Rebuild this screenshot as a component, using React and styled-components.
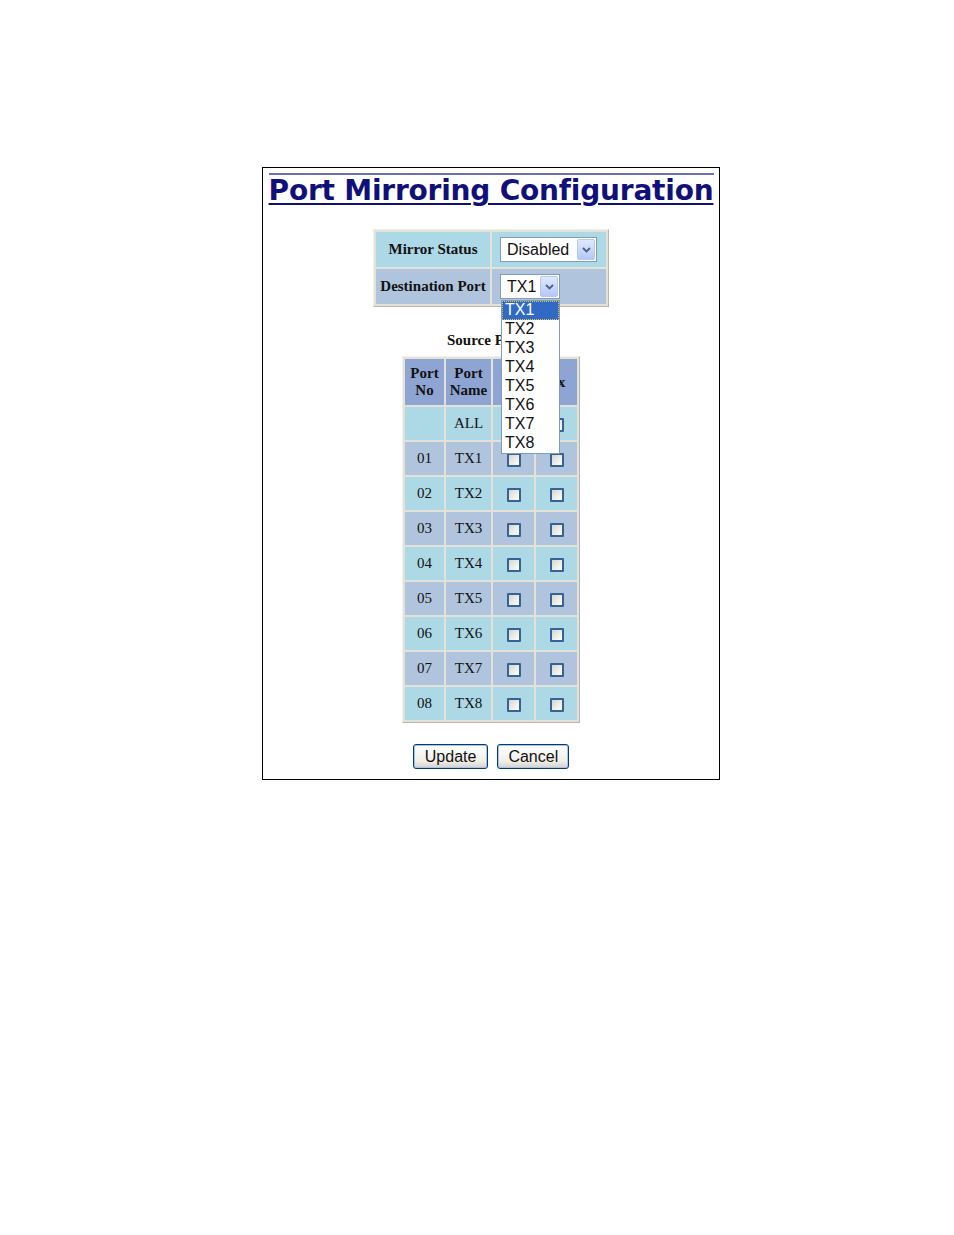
import React from "react";
import styled, { createGlobalStyle } from "styled-components";

const Global = createGlobalStyle`
  body {
    margin: 0;
    background: #fff;
    font-family: "Liberation Serif", "Times New Roman", serif;
  }
`;

const Page = styled.div`
  padding: 167px 0 0 262px;
  height: 1068px;
`;

const Frame = styled.div`
  width: 456px;
  border: 1px solid #000;
  padding: 5px 0 10px 0;
  display: flex;
  flex-direction: column;
  align-items: center;
`;

const Title = styled.h1`
  margin: 0;
  width: 445px;
  border-top: 2px solid #6f6fb4;
  font-family: "DejaVu Sans", Verdana, sans-serif;
  font-weight: bold;
  font-size: 28px;
  line-height: 32px;
  color: #10107a;
  text-align: center;
  text-decoration: underline;
  text-decoration-thickness: 2px;
  text-underline-offset: 3px;
  letter-spacing: -0.2px;
  white-space: nowrap;
`;

const StatusTable = styled.table`
  margin-top: 22px;
  border-collapse: separate;
  border-spacing: 2px;
  background: #e4e2d8;
  border: 1px solid;
  border-color: #f2f1ea #b9b6a8 #b9b6a8 #f2f1ea;
`;

const Row = styled.tr`
  background: ${(p) => (p.$alt ? "#b0c4de" : "#add8e6")};
`;

const LabelCell = styled.td`
  width: 114px;
  height: 35px;
  padding: 0;
  text-align: center;
  font-weight: bold;
  font-size: 15px;
  color: #111;
`;

const FieldCell = styled.td`
  width: 114px;
  height: 35px;
  padding: 0 0 0 8px;
  vertical-align: middle;
  box-sizing: border-box;
`;

const SelectBox = styled.div`
  position: relative;
  display: flex;
  align-items: center;
  width: ${(p) => p.$w}px;
  height: 23px;
  background: #fff;
  border: 1px solid #7f9db9;
  font-family: "Liberation Sans", Arial, sans-serif;
  font-size: 16px;
  color: #111;
`;

const SelectText = styled.span`
  flex: 1;
  padding-left: 6px;
  line-height: 23px;
`;

const ArrowBtn = styled.span`
  width: 18px;
  height: 21px;
  margin-right: 1px;
  border-radius: 2px;
  background: linear-gradient(#dfe8fd, #b5c8f7);
  border: 1px solid #b7c7ef;
  box-sizing: border-box;
  display: flex;
  align-items: center;
  justify-content: center;
`;

const List = styled.div`
  position: absolute;
  left: 0;
  top: 25px;
  width: 57px;
  border: 1px solid #7f9db9;
  background: #fff;
  z-index: 5;
`;

const Option = styled.div`
  height: 19px;
  line-height: 18px;
  padding-left: 3px;
  font-size: 16px;
  color: ${(p) => (p.$sel ? "#fff" : "#111")};
  background: ${(p) => (p.$sel ? "#316ac5" : "transparent")};
  outline: ${(p) => (p.$sel ? "1px dotted #e8c050" : "none")};
  outline-offset: -1px;
`;

const Caption = styled.div`
  margin-top: 25px;
  margin-right: 12px;
  font-weight: bold;
  font-size: 15px;
  color: #111;
  line-height: 17px;
`;

const PortTable = styled.table`
  margin-top: 7px;
  border-collapse: separate;
  border-spacing: 2px;
  background: #e4e2d8;
  border: 1px solid;
  border-color: #f2f1ea #b9b6a8 #b9b6a8 #f2f1ea;
`;

const Head = styled.th`
  background: #8ea5d3;
  height: 46px;
  width: ${(p) => p.$w}px;
  padding: 0;
  font-size: 15px;
  line-height: 17px;
  font-weight: bold;
  color: #111;
`;

const Cell = styled.td`
  height: 33px;
  padding: 0;
  text-align: center;
  vertical-align: middle;
  font-size: 15px;
  color: #111;
`;

const Check = styled.span`
  display: inline-block;
  width: 14px;
  height: 14px;
  margin-top: 1px;
  border: 2px solid #356396;
  border-radius: 1px;
  background: linear-gradient(135deg, #d6d6d0, #ffffff);
  box-sizing: border-box;
  vertical-align: middle;
`;

const Buttons = styled.div`
  margin-top: 21px;
  display: flex;
  gap: 9px;
`;

const Button = styled.button`
  height: 25px;
  padding: 0 ${(p) => p.$pad || 10}px;
  border: 1px solid #003c74;
  border-radius: 3px;
  background: linear-gradient(#ffffff, #f0efe8 70%, #d6d0c5);
  font-family: "Liberation Sans", Arial, sans-serif;
  font-size: 16px;
  color: #111;
  box-shadow: inset 0 0 0 1px #aac3ee;
`;

const Chevron = () => (
  <svg width="9" height="6" viewBox="0 0 9 6">
    <path d="M1 1 L4.5 4.5 L8 1" fill="none" stroke="#4d6185" strokeWidth="1.8" />
  </svg>
);

const ports = ["01", "02", "03", "04", "05", "06", "07", "08"];

export default function App() {
  return (
    <Page>
      <Global />
      <Frame>
        <Title>Port Mirroring Configuration</Title>
        <StatusTable>
          <tbody>
            <Row>
              <LabelCell>Mirror Status</LabelCell>
              <FieldCell>
                <SelectBox $w={95}>
                  <SelectText>Disabled</SelectText>
                  <ArrowBtn>
                    <Chevron />
                  </ArrowBtn>
                </SelectBox>
              </FieldCell>
            </Row>
            <Row $alt>
              <LabelCell>Destination Port</LabelCell>
              <FieldCell>
                <SelectBox $w={58}>
                  <SelectText>TX1</SelectText>
                  <ArrowBtn>
                    <Chevron />
                  </ArrowBtn>
                  <List>
                    {ports.map((p, i) => (
                      <Option key={p} $sel={i === 0}>
                        TX{i + 1}
                      </Option>
                    ))}
                  </List>
                </SelectBox>
              </FieldCell>
            </Row>
          </tbody>
        </StatusTable>
        <Caption>Source Port</Caption>
        <PortTable>
          <tbody>
            <tr>
              <Head $w={39}>Port<br />No</Head>
              <Head $w={45}>Port<br />Name</Head>
              <Head $w={41}>Rx</Head>
              <Head $w={41}>Tx</Head>
            </tr>
            <Row>
              <Cell />
              <Cell>ALL</Cell>
              <Cell><Check /></Cell>
              <Cell><Check /></Cell>
            </Row>
            {ports.map((p, i) => (
              <Row key={p} $alt={i % 2 === 0}>
                <Cell>{p}</Cell>
                <Cell>TX{i + 1}</Cell>
                <Cell><Check /></Cell>
                <Cell><Check /></Cell>
              </Row>
            ))}
          </tbody>
        </PortTable>
        <Buttons>
          <Button $pad={11}>Update</Button>
          <Button $pad={10}>Cancel</Button>
        </Buttons>
      </Frame>
    </Page>
  );
}
